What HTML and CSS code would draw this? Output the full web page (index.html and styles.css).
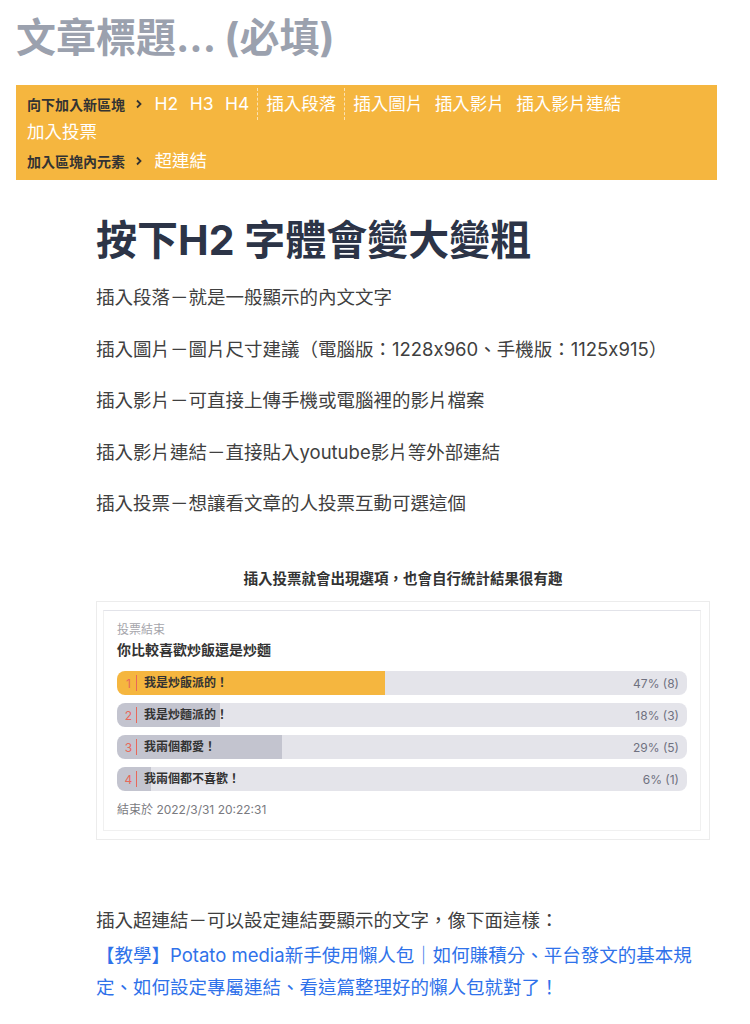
FILE: index.html
```html
<!DOCTYPE html>
<html lang="zh-Hant">
<head>
    <meta charset="UTF-8">
    <meta name="viewport" content="width=device-width, initial-scale=1.0">
    <title>文章編輯</title>
    <link rel="stylesheet" href="styles.css">
</head>
<body>
    <div class="editor">
        <h1 class="post-title">文章標題... (必填)</h1>

        <div class="toolbar">
            <div class="tool-row">
                <span class="tool-label">向下加入新區塊
                    <svg width="8" height="10" viewBox="0 0 8 10"><path d="M2 1.5l3.5 3.5L2 8.5" fill="none" stroke="#333" stroke-width="1.8"/></svg>
                </span>
                <span class="tool">H2</span>
                <span class="tool">H3</span>
                <span class="tool">H4</span>
                <span class="tool-sep"></span>
                <span class="tool">插入段落</span>
                <span class="tool-sep"></span>
                <span class="tool">插入圖片</span>
                <span class="tool">插入影片</span>
                <span class="tool">插入影片連結</span>
                <span class="tool">加入投票</span>
            </div>
            <div class="tool-row">
                <span class="tool-label">加入區塊內元素
                    <svg width="8" height="10" viewBox="0 0 8 10"><path d="M2 1.5l3.5 3.5L2 8.5" fill="none" stroke="#333" stroke-width="1.8"/></svg>
                </span>
                <span class="tool">超連結</span>
            </div>
        </div>

        <div class="content">
            <h2 class="heading">按下H2 字體會變大變粗</h2>
            <p>插入段落－就是一般顯示的內文文字</p>
            <p>插入圖片－圖片尺寸建議（電腦版：1228x960、手機版：1125x915）</p>
            <p>插入影片－可直接上傳手機或電腦裡的影片檔案</p>
            <p>插入影片連結－直接貼入youtube影片等外部連結</p>
            <p>插入投票－想讓看文章的人投票互動可選這個</p>

            <div class="caption">插入投票就會出現選項，也會自行統計結果很有趣</div>

            <div class="poll-frame">
                <div class="poll">
                    <div class="poll-status">投票結束</div>
                    <div class="poll-question">你比較喜歡炒飯還是炒麵</div>
                    <div class="poll-options">
                        <div class="poll-bar winner" style="--pct: 47%">
                            <span class="poll-num">1</span>
                            <span class="poll-text">我是炒飯派的！</span>
                            <span class="poll-pct">47% (8)</span>
                        </div>
                        <div class="poll-bar" style="--pct: 18%">
                            <span class="poll-num">2</span>
                            <span class="poll-text">我是炒麵派的！</span>
                            <span class="poll-pct">18% (3)</span>
                        </div>
                        <div class="poll-bar" style="--pct: 29%">
                            <span class="poll-num">3</span>
                            <span class="poll-text">我兩個都愛！</span>
                            <span class="poll-pct">29% (5)</span>
                        </div>
                        <div class="poll-bar" style="--pct: 6%">
                            <span class="poll-num">4</span>
                            <span class="poll-text">我兩個都不喜歡！</span>
                            <span class="poll-pct">6% (1)</span>
                        </div>
                    </div>
                    <div class="poll-end">結束於 2022/3/31 20:22:31</div>
                </div>
            </div>

            <p class="link-intro">插入超連結－可以設定連結要顯示的文字，像下面這樣：</p>
            <p class="link-line"><a href="#">【教學】Potato media新手使用懶人包｜如何賺積分、平台發文的基本規定、如何設定專屬連結、看這篇整理好的懶人包就對了！</a></p>
        </div>
    </div>
</body>
</html>
```

FILE: styles.css
```css
body {
    margin: 0;
    background: #fff;
    font-family: Inter, "Noto Sans CJK TC", sans-serif;
    color: #404040;
}
.editor {
    max-width: 701px;
    padding: 14px 16px;
}
.post-title {
    margin: 0 0 23px;
    font-size: 40px;
    line-height: 48px;
    font-weight: 700;
    color: #9ba1ae;
}

/* toolbar */
.toolbar {
    background: #f5b63f;
    padding: 5px 24px 5px 11px;
}
.tool-row {
    display: flex;
    flex-wrap: wrap;
    align-items: center;
    column-gap: 11.5px;
}
.tool-label {
    display: flex;
    align-items: center;
    gap: 10px;
    height: 28px;
    font-size: 14px;
    font-weight: 700;
    color: #333;
}
.tool {
    height: 28px;
    line-height: 28px;
    font-size: 17.5px;
    color: #fff;
    cursor: pointer;
}
.tool-row + .tool-row .tool { height: 29px; line-height: 30px; }
.tool-sep {
    align-self: stretch;
    border-left: 1px dashed rgba(255, 255, 255, 0.6);
    margin: -2px -3px -2px -4px;
}

/* article body */
.content {
    margin-left: 80px;
    width: 614px;
}
.heading {
    margin: 34px 0 15px;
    font-size: 41px;
    line-height: 52px;
    font-weight: 700;
    color: #2c3447;
}
.content p {
    margin: 0 0 19.5px;
    font-size: 18.5px;
    line-height: 32px;
}
.caption {
    margin: 50px 0 12px;
    text-align: center;
    font-size: 14.5px;
    line-height: 20px;
    font-weight: 700;
    color: #333;
}

/* poll screenshot */
.poll-frame {
    border: 1px solid #ececec;
    padding: 8px 8px 8px 6px;
}
.poll {
    border: 1px solid #f0f0f0;
    border-top-color: #e2e3e9;
    padding: 10px 13px 11px 13px;
}
.poll-status {
    font-size: 12px;
    line-height: 18px;
    color: #a5a5ab;
}
.poll-question {
    margin-top: 1px;
    font-size: 14px;
    line-height: 20px;
    font-weight: 700;
    color: #333;
}
.poll-options {
    display: flex;
    flex-direction: column;
    gap: 8px;
    margin: 11px 0 10px;
}
.poll-bar {
    --fill: #c3c4cf;
    display: flex;
    align-items: center;
    height: 24px;
    padding: 0 8px 0 6px;
    border-radius: 8px;
    background: linear-gradient(90deg, var(--fill) var(--pct), #e4e4ea var(--pct));
    font-size: 12px;
}
.poll-bar.winner { --fill: #f5b63f; }
.poll-num {
    width: 11px;
    text-align: center;
    color: #e8685a;
}
.poll-text {
    margin-left: 2px;
    padding-left: 7px;
    border-left: 1px solid #e8685a;
    line-height: 16px;
    font-weight: 700;
    color: #333;
}
.poll-pct {
    margin-left: auto;
    color: #6f7180;
}
.poll-end {
    font-size: 12px;
    line-height: 18px;
    color: #7a7a80;
}

.content .link-intro {
    margin: 64px 0 3px;
}
.link-line a {
    color: #2f72ea;
    text-decoration: none;
}
```
